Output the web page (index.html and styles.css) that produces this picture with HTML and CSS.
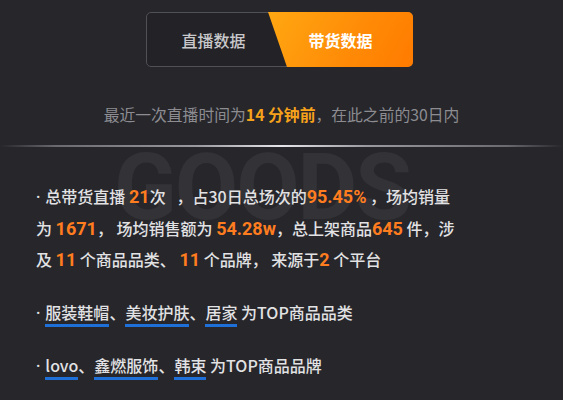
FILE: index.html
```html
<!DOCTYPE html>
<html lang="zh">
<head>
<meta charset="utf-8">
<link rel="stylesheet" href="styles.css">
</head>
<body>
<div class="page">
  <div class="tabs">
    <div class="tab tab-live">直播数据</div>
    <div class="tab tab-goods">带货数据</div>
  </div>
  <p class="subtitle">最近一次直播时间为<span class="hl">14 分钟前</span>，在此之前的30日内</p>
  <div class="divider"></div>
  <div class="content">
    <div class="watermark">GOODS</div>
    <p class="summary"><span class="dot">·</span>总带货直播 <b class="num">21</b>次 &nbsp; ，占30日总场次的<b class="num">95.45%</b> ，场均销量<br>为 <b class="num">1671</b>， 场均销售额为 <b class="num">54.28w</b>，总上架商品<b class="num">645</b> 件，涉<br>及 <b class="num">11</b> 个商品品类、 <b class="num">11</b> 个品牌， 来源于<b class="num">2</b> 个平台</p>
    <p class="tags"><span class="dot">·</span><span class="tag">服装鞋帽</span>、<span class="tag">美妆护肤</span>、<span class="tag">居家</span> 为TOP商品品类</p>
    <p class="tags"><span class="dot">·</span><span class="tag">lovo</span>、<span class="tag">鑫燃服饰</span>、<span class="tag">韩束</span> 为TOP商品品牌</p>
  </div>
</div>
</body>
</html>
```
FILE: styles.css
```css
html, body {
  margin: 0;
  padding: 0;
  background: #26262b;
}
.page {
  width: 563px;
  height: 400px;
  overflow: hidden;
  font-family: "Noto Sans CJK SC", "Noto Sans", sans-serif;
  color: #dcdcdc;
}
.tabs {
  display: flex;
  box-sizing: border-box;
  width: 267px;
  height: 55px;
  margin: 12px 0 0 146px;
  border: 1px solid #505057;
  border-radius: 5px;
  background: #232327;
}
.tab {
  display: flex;
  align-items: center;
  justify-content: center;
  font-size: 16px;
  font-weight: 500;
}
.tab-live {
  flex: 0 0 121px;
  box-sizing: border-box;
  padding-left: 12px;
  color: #c9c9cc;
}
.tab-goods {
  flex: 0 0 145px;
  margin: -1px -1px -1px 0;
  border-radius: 0 5px 5px 0;
  clip-path: polygon(0 0, 100% 0, 100% 100%, 19px 100%);
  background: linear-gradient(120deg, #ffa812 0%, #ff8a06 60%, #ff7b00 100%);
  color: #fff;
  font-weight: 700;
}
.subtitle {
  margin: 37px 0 0;
  text-align: center;
  font-size: 15.8px;
  line-height: 22px;
  color: #8c8c91;
}
.hl {
  color: #f7a21b;
  font-weight: 700;
}
.divider {
  height: 2px;
  margin-top: 19px;
  background: linear-gradient(90deg, rgba(120,120,125,0) 0%, #6a6a70 10%, #9a9aa0 35%, #e6e6ea 50%, #9a9aa0 65%, #6a6a70 90%, rgba(120,120,125,0) 100%);
}
.content {
  position: relative;
  padding: 34px 36px 0;
}
.watermark {
  position: absolute;
  left: 114px;
  top: -5px;
  font-family: "Roboto", "Noto Sans", sans-serif;
  font-weight: 700;
  font-size: 92px;
  line-height: 92px;
  letter-spacing: -2px;
  color: rgba(255, 255, 255, 0.06);
  z-index: 0;
}
.dot {
  font-family: "Noto Sans", sans-serif;
  margin-right: 5px;
}
.summary {
  position: relative;
  z-index: 1;
  margin: 0;
  white-space: nowrap;
  font-size: 16px;
  font-weight: 500;
  line-height: 30.5px;
  color: #e2e2e4;
}
.num {
  font-family: "Roboto", "Noto Sans", sans-serif;
  font-weight: 700;
  font-size: 18px;
  color: #ff7d1f;
}
.tags {
  position: relative;
  z-index: 1;
  margin: 20px 0 0;
  font-size: 16px;
  font-weight: 500;
  line-height: 32px;
  color: #e2e2e4;
}
.tags + .tags {
  margin-top: 20px;
}
.tag {
  border-bottom: 3px solid #1e6fd8;
}
```
